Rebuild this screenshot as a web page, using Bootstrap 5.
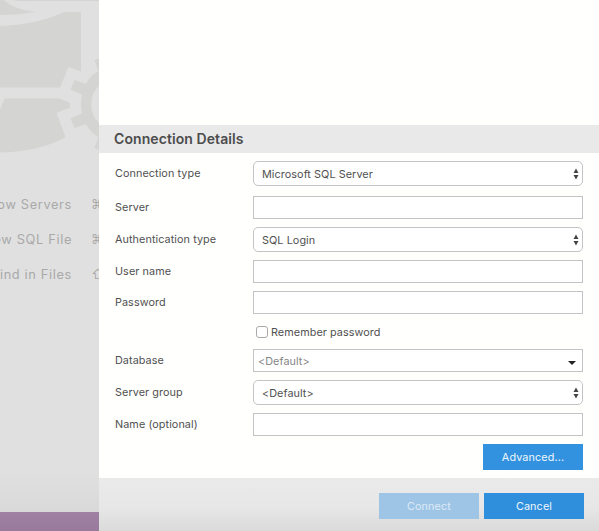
<!DOCTYPE html>
<html lang="en">
<head>
<meta charset="utf-8">
<meta name="viewport" content="width=device-width, initial-scale=1">
<title>Connection Details</title>
<link href="https://cdn.jsdelivr.net/npm/bootstrap@5.3.0/dist/css/bootstrap.min.css" rel="stylesheet">
<style>
body{font-family:Inter,"Liberation Sans",sans-serif;font-size:10.8px;line-height:14px;letter-spacing:.08px;color:#505050;background:#fffffe}
.shell{height:531px}
.backdrop{width:99px;background:linear-gradient(#e0e0e0 0,#e0e0e0 470px,#d9d9d9 512px)}
.art{height:187px}
.hint{height:35px;padding-top:1px;font-size:12.8px;letter-spacing:.65px;color:#a9a9a9;white-space:nowrap}
.hint-name{width:72px}
.hint-key{width:27px;padding-left:19px}
.status{height:19px;background:linear-gradient(#a081a4,#987a9c)}
.recent{height:125px}
.heading{height:28px;padding-left:15px;background:#e9e9e9;font-size:14px;font-weight:600;letter-spacing:.08px;color:#4c4c4c}
.fields{height:325px;padding:8px 16px;gap:8px}
.first{margin-bottom:2px}
.field label{width:138px;padding-top:1px}
.form-control,.form-select{width:330px;border:1px solid #c4c4c6;background-color:#fff;color:#505050;font-size:10.8px;line-height:14px;letter-spacing:.08px}
.form-control{height:23px;min-height:0;padding:1px 4px 0;border-radius:0}
.form-select{height:25px;padding:3px 8px 0;border-radius:5px;background-image:none}
.picker{width:330px}
.picker svg{position:absolute;right:4.5px;top:6.5px}
.picker .caret{right:7px;top:12px}
.form-control::placeholder{color:#858585;opacity:1}
.remember{height:19px;padding-left:141px}
.remember label{padding-top:2px}
.remember .form-check-input{width:12px;height:12px;margin:0 3px 0 0;border:1px solid #aaa;border-radius:3px}
.action{width:100px;height:26px;padding:2px 0 0;border:0;border-radius:0;background:#3292e0;color:#f0f7fd;font-size:10.8px;line-height:24px;letter-spacing:.12px}
.foot{height:53px;padding:15px 15px 0;gap:5px;background:linear-gradient(#eaeaea 0,#e7e7e7 55%,#dadada)}
.action:disabled{background:#9fc5e6;color:#dceaf6;opacity:1}
.foot .action:not(:disabled){background:#2f8fdc}
</style>
</head>
<body class="overflow-hidden">
<div class="shell d-flex">
  <aside class="backdrop d-flex flex-column flex-shrink-0 overflow-hidden">
    <svg class="art d-block flex-shrink-0" width="99" height="187" viewBox="0 0 99 187" aria-hidden="true">
      <g fill="#d4d4d2">
        <path d="M13 0H99V1H32Q20 2 13 0ZM0 0H4Q14 10 36 11.500Q20 15 0 15Z"/>
        <path d="M0 26Q36 25 64 12H81V71.500L68.500 67L60 87.500H0Z"/>
        <path d="M4.500 98.500H60L70 103V107.500L56.500 113L65.500 137Q39 152 0 152.500V110Z"/>
        <path d="M99 58.500L94.500 60L98.500 71.500Q90 75 86 84L74.500 80L70.500 89.500L82 94.500Q80 104 82 113.500L70.500 118.500L74.500 128L86 124Q90 132 98.500 137L94.500 148L99 150V123Q91 116 91.300 104Q91.500 92 99 86Z"/>
      </g>
    </svg>
    <div class="hint d-flex align-items-center"><div class="hint-name d-flex justify-content-end">Show Servers</div><span class="hint-key">⌘</span></div>
    <div class="hint d-flex align-items-center"><div class="hint-name d-flex justify-content-end">New SQL File</div><span class="hint-key">⌘</span></div>
    <div class="hint d-flex align-items-center"><div class="hint-name d-flex justify-content-end">Find in Files</div><span class="hint-key">⇧</span></div>
    <div class="status mt-auto"></div>
  </aside>
  <main class="flex-grow-1">
    <div class="recent"></div>
    <h1 class="heading d-flex align-items-center mb-0">Connection Details</h1>
    <form class="fields d-flex flex-column">
      <div class="field first d-flex align-items-center"><label for="type">Connection type</label>
        <div class="picker position-relative"><select class="form-select" id="type"><option>Microsoft SQL Server</option></select><svg width="6" height="12" viewBox="0 0 6 12" fill="#444"><path d="M.500 5L3 .500L5.500 5ZM.500 7H5.500L3 11.500Z"/></svg></div></div>
      <div class="field d-flex align-items-center"><label for="server">Server</label><input class="form-control" id="server"></div>
      <div class="field d-flex align-items-center"><label for="auth">Authentication type</label>
        <div class="picker position-relative"><select class="form-select" id="auth"><option>SQL Login</option></select><svg width="6" height="12" viewBox="0 0 6 12" fill="#444"><path d="M.500 5L3 .500L5.500 5ZM.500 7H5.500L3 11.500Z"/></svg></div></div>
      <div class="field d-flex align-items-center"><label for="user">User name</label><input class="form-control" id="user"></div>
      <div class="field d-flex align-items-center"><label for="pass">Password</label><input class="form-control" id="pass" type="password"></div>
      <div class="remember d-flex align-items-center"><input class="form-check-input" type="checkbox" id="keep"><label for="keep">Remember password</label></div>
      <div class="field d-flex align-items-center"><label for="db">Database</label>
        <div class="picker position-relative"><input class="form-control" id="db" placeholder="&lt;Default&gt;"><svg class="caret" width="8" height="4" viewBox="0 0 8 4" fill="#222"><path d="M0 0H8L4 4Z"/></svg></div></div>
      <div class="field d-flex align-items-center"><label for="group">Server group</label>
        <div class="picker position-relative"><select class="form-select" id="group"><option>&lt;Default&gt;</option></select><svg width="6" height="12" viewBox="0 0 6 12" fill="#444"><path d="M.500 5L3 .500L5.500 5ZM.500 7H5.500L3 11.500Z"/></svg></div></div>
      <div class="field d-flex align-items-center"><label for="name">Name (optional)</label><input class="form-control" id="name"></div>
      <button class="btn action align-self-end" type="button">Advanced...</button>
    </form>
    <footer class="foot d-flex justify-content-end">
      <button class="btn action" type="button" disabled>Connect</button>
      <button class="btn action" type="button">Cancel</button>
    </footer>
  </main>
</div>
<script src="https://cdn.jsdelivr.net/npm/bootstrap@5.3.0/dist/js/bootstrap.bundle.min.js"></script>
</body>
</html>
